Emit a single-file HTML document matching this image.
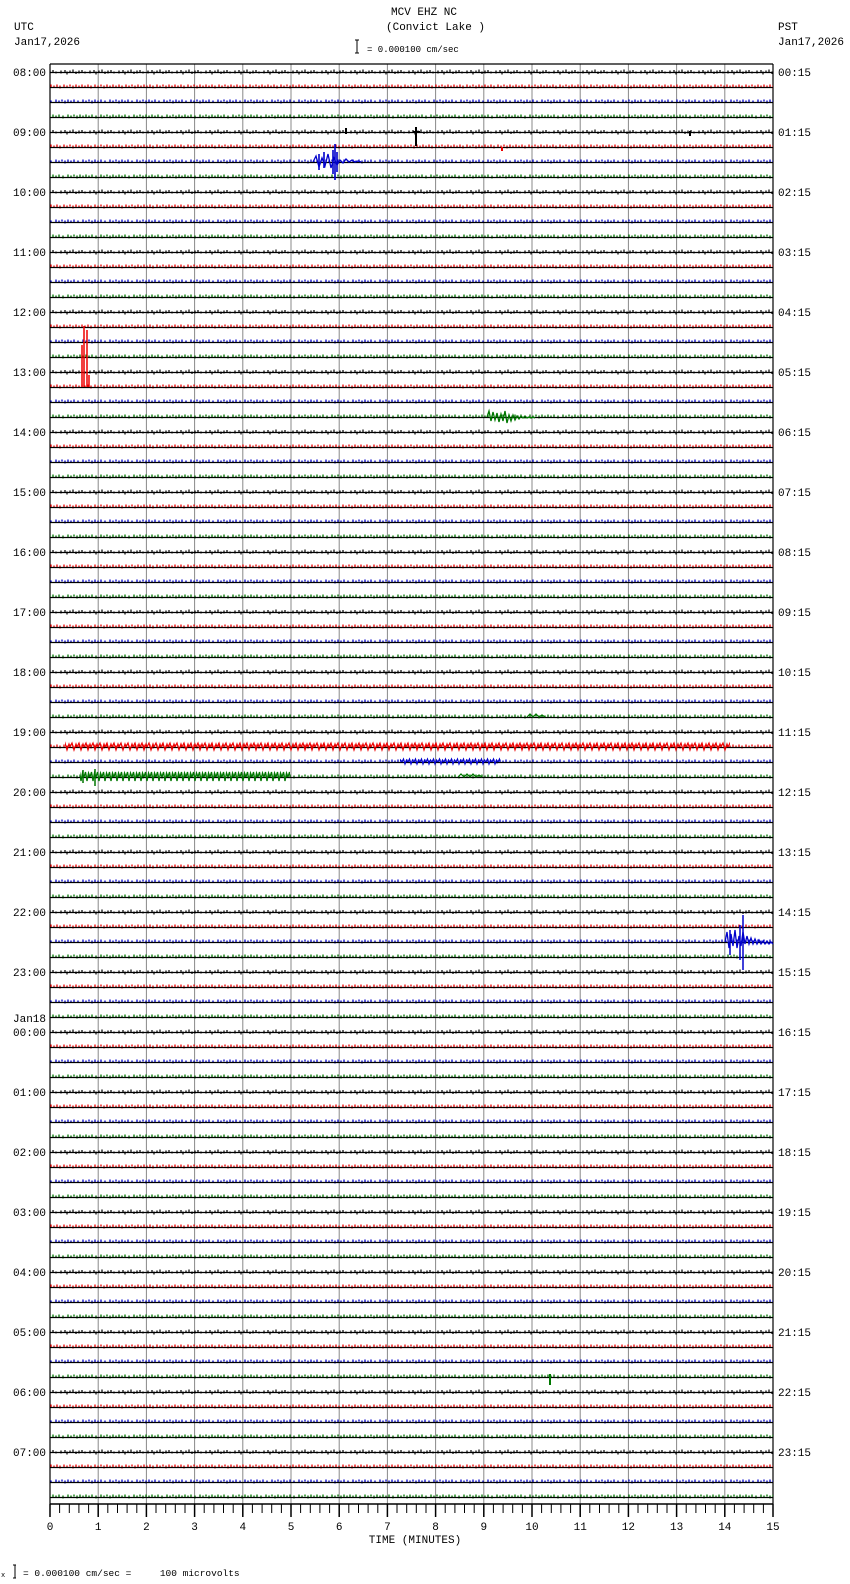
<!DOCTYPE html>
<html><head><meta charset="utf-8"><style>
html,body{margin:0;padding:0;background:#fff;width:850px;height:1584px;overflow:hidden}
svg{display:block}
text{font-family:"Liberation Mono","DejaVu Sans Mono",monospace;font-size:11px;fill:#000}
</style></head><body>
<svg width="850" height="1584" viewBox="0 0 850 1584" xmlns="http://www.w3.org/2000/svg">
<defs>
<pattern id="pk" width="29" height="15" patternUnits="userSpaceOnUse" y="-7.5"><path d="M3 6v3M7 5.5v2M9 7v3M12 6v2M15 5v3M18 7v2.5M21 6v3M24 5.5v2M27 7v2" stroke="#000" stroke-width="1.2" fill="none"/></pattern>
<pattern id="pr" width="31" height="15" patternUnits="userSpaceOnUse" y="-7.5"><path d="M2 5v3M5 6v2.5M8 5v2M11 6v3M14 5v2.5M17 6v2M20 5v3M23 6v2M26 5v2.5M29 6v3" stroke="#e00" stroke-width="1.3" fill="none"/></pattern>
<pattern id="pb" width="27" height="15" patternUnits="userSpaceOnUse" y="-7.5"><path d="M2 5v3M5 6v2.5M8 5v2M11 6v3M14 5v2.5M17 6v2M20 5v3M24 6v2.5" stroke="#00c" stroke-width="1.3" fill="none"/></pattern>
<pattern id="pg" width="33" height="15" patternUnits="userSpaceOnUse" y="-7.5"><path d="M2 5v3M5 6v2.5M8 5v2M11 6v3M14 5v2.5M17 6v2M20 5v3M23 6v2M26 5v2.5M30 6v3" stroke="#070" stroke-width="1.3" fill="none"/></pattern>
<pattern id="br" width="7" height="20" patternUnits="userSpaceOnUse" y="737"><path d="M0 10L2 6L4 13L6 7L7 10" stroke="#e00" stroke-width="1.2" fill="none"/></pattern>
<pattern id="bg" width="6" height="20" patternUnits="userSpaceOnUse" y="767"><path d="M0 10L1.5 5L3 14L4.5 6L6 10" stroke="#070" stroke-width="1.3" fill="none"/></pattern>
<pattern id="bb" width="6" height="20" patternUnits="userSpaceOnUse" y="752"><path d="M0 10L1.5 7L3 12L4.5 8L6 10" stroke="#00c" stroke-width="1.2" fill="none"/></pattern>
<g id="tr">
<rect x="50" y="-6" width="723" height="12" fill="url(#pk)"/>
<rect x="50" y="9" width="723" height="12" fill="url(#pr)"/>
<rect x="50" y="24" width="723" height="12" fill="url(#pb)"/>
<rect x="50" y="39" width="723" height="12" fill="url(#pg)"/>
<path d="M50 0.5H773M50 15.5H773M50 30.5H773M50 45.5H773" stroke="#000" stroke-width="1.3"/>
</g>
</defs>
<!-- header -->
<text x="391" y="15">MCV EHZ NC</text>
<text x="386" y="30">(Convict Lake )</text>
<text x="14" y="30">UTC</text>
<text x="14" y="45">Jan17,2026</text>
<text x="778" y="30">PST</text>
<text x="778" y="45">Jan17,2026</text>
<path d="M357 40V53M355 40h4M355 53h4" stroke="#000" stroke-width="1"/>
<text x="367" y="52" style="font-size:9px">= 0.000100 cm/sec</text>
<!-- grid -->
<g stroke="#888" stroke-width="1">
<path d="M98.2 64V1504M146.4 64V1504M194.6 64V1504M242.8 64V1504M291 64V1504M339.2 64V1504M387.4 64V1504M435.6 64V1504M483.8 64V1504M532 64V1504M580.2 64V1504M628.4 64V1504M676.6 64V1504M724.8 64V1504"/>
</g>
<path d="M50 64H773M50 64V1504M773 64V1504" stroke="#000" stroke-width="1.2" fill="none"/>
<!-- traces -->
<g transform="translate(0,72)"><use href="#tr"/></g>
<g transform="translate(0,132)"><use href="#tr"/></g>
<g transform="translate(0,192)"><use href="#tr"/></g>
<g transform="translate(0,252)"><use href="#tr"/></g>
<g transform="translate(0,312)"><use href="#tr"/></g>
<g transform="translate(0,372)"><use href="#tr"/></g>
<g transform="translate(0,432)"><use href="#tr"/></g>
<g transform="translate(0,492)"><use href="#tr"/></g>
<g transform="translate(0,552)"><use href="#tr"/></g>
<g transform="translate(0,612)"><use href="#tr"/></g>
<g transform="translate(0,672)"><use href="#tr"/></g>
<g transform="translate(0,732)"><use href="#tr"/></g>
<g transform="translate(0,792)"><use href="#tr"/></g>
<g transform="translate(0,852)"><use href="#tr"/></g>
<g transform="translate(0,912)"><use href="#tr"/></g>
<g transform="translate(0,972)"><use href="#tr"/></g>
<g transform="translate(0,1032)"><use href="#tr"/></g>
<g transform="translate(0,1092)"><use href="#tr"/></g>
<g transform="translate(0,1152)"><use href="#tr"/></g>
<g transform="translate(0,1212)"><use href="#tr"/></g>
<g transform="translate(0,1272)"><use href="#tr"/></g>
<g transform="translate(0,1332)"><use href="#tr"/></g>
<g transform="translate(0,1392)"><use href="#tr"/></g>
<g transform="translate(0,1452)"><use href="#tr"/></g>
<!-- events -->
<path d="M416 127V146M413 132h7M346 128v6M690 131v5" stroke="#000" stroke-width="2"/>
<path d="M313 162l3-6 3 11 3-9 3 8 3-12 3 14 3-10 3 7 3-5 3 3 3-4 3 3 3-2 3 2 3-1 3 1" stroke="#00c" stroke-width="1.3" fill="none"/>
<path d="M335 144V180M333 150V174M337 152V172M319 154V170M324 152V168" stroke="#00c" stroke-width="1.6"/>
<path d="M502 147v4" stroke="#e00" stroke-width="2"/>
<path d="M84 387V326M87 387V330M82 387V345M89 387V375" stroke="#e00" stroke-width="1.5"/>
<path d="M487 417l2-6 2 10 2-9 2 8 2-7 2 9 2-8 2 7 2-10 2 12 2-8 2 6 2-6 2 5 2-4 2 3 2-3 2 2 2-2 2 2 2-1 2 1 2-1 2 1" stroke="#070" stroke-width="1.3" fill="none"/>
<rect x="65" y="737" width="665" height="20" fill="url(#br)"/>
<rect x="400" y="752" width="100" height="20" fill="url(#bb)"/>
<rect x="80" y="767" width="210" height="20" fill="url(#bg)"/>
<path d="M95 769V786M83 770V783" stroke="#070" stroke-width="1.5"/>
<path d="M458 777l3-3 3 3 3-3 3 3 3-3 3 3 3-2 3 2" stroke="#070" stroke-width="1.2" fill="none"/>
<path d="M725 942l2-10 2 16 2-14 2 12 2-16 2 18 2-12 2 10 2-14 2 12 2-8 2 8 2-6 2 6 2-5 2 5 2-4 2 4 2-3 2 3 2-3 2 3 2-2 2 2" stroke="#00c" stroke-width="1.3" fill="none"/>
<path d="M743 915V970M740 925V960M730 930V955" stroke="#00c" stroke-width="1.5"/>
<path d="M527 717l3-3 3 3 3-3 3 3 3-2 3 2" stroke="#070" stroke-width="1.2" fill="none"/>
<path d="M550 1374v11" stroke="#070" stroke-width="2"/>
<!-- left labels -->
<g>
<text x="13" y="76">08:00</text><text x="13" y="136">09:00</text><text x="13" y="196">10:00</text><text x="13" y="256">11:00</text>
<text x="13" y="316">12:00</text><text x="13" y="376">13:00</text><text x="13" y="436">14:00</text><text x="13" y="496">15:00</text>
<text x="13" y="556">16:00</text><text x="13" y="616">17:00</text><text x="13" y="676">18:00</text><text x="13" y="736">19:00</text>
<text x="13" y="796">20:00</text><text x="13" y="856">21:00</text><text x="13" y="916">22:00</text><text x="13" y="976">23:00</text>
<text x="13" y="1022">Jan18</text><text x="13" y="1036">00:00</text><text x="13" y="1096">01:00</text><text x="13" y="1156">02:00</text><text x="13" y="1216">03:00</text>
<text x="13" y="1276">04:00</text><text x="13" y="1336">05:00</text><text x="13" y="1396">06:00</text><text x="13" y="1456">07:00</text>
</g>
<g>
<text x="778" y="76">00:15</text><text x="778" y="136">01:15</text><text x="778" y="196">02:15</text><text x="778" y="256">03:15</text>
<text x="778" y="316">04:15</text><text x="778" y="376">05:15</text><text x="778" y="436">06:15</text><text x="778" y="496">07:15</text>
<text x="778" y="556">08:15</text><text x="778" y="616">09:15</text><text x="778" y="676">10:15</text><text x="778" y="736">11:15</text>
<text x="778" y="796">12:15</text><text x="778" y="856">13:15</text><text x="778" y="916">14:15</text><text x="778" y="976">15:15</text>
<text x="778" y="1036">16:15</text><text x="778" y="1096">17:15</text><text x="778" y="1156">18:15</text><text x="778" y="1216">19:15</text>
<text x="778" y="1276">20:15</text><text x="778" y="1336">21:15</text><text x="778" y="1396">22:15</text><text x="778" y="1456">23:15</text>
</g>
<!-- axis -->
<path d="M50 1504H773" stroke="#000" stroke-width="1.5"/>
<g stroke="#000" stroke-width="1">
<path d="M59.6 1504v9M69.3 1504v9M78.9 1504v9M88.6 1504v9M107.8 1504v9M117.5 1504v9M127.1 1504v9M136.8 1504v9M156 1504v9M165.7 1504v9M175.3 1504v9M185 1504v9M204.2 1504v9M213.9 1504v9M223.5 1504v9M233.2 1504v9M252.4 1504v9M262.1 1504v9M271.7 1504v9M281.4 1504v9M300.6 1504v9M310.3 1504v9M319.9 1504v9M329.6 1504v9M348.8 1504v9M358.5 1504v9M368.1 1504v9M377.8 1504v9M397 1504v9M406.7 1504v9M416.3 1504v9M426 1504v9M445.2 1504v9M454.9 1504v9M464.5 1504v9M474.2 1504v9M493.4 1504v9M503.1 1504v9M512.7 1504v9M522.4 1504v9M541.6 1504v9M551.3 1504v9M560.9 1504v9M570.6 1504v9M589.8 1504v9M599.5 1504v9M609.1 1504v9M618.8 1504v9M638 1504v9M647.7 1504v9M657.3 1504v9M667 1504v9M686.2 1504v9M695.9 1504v9M705.5 1504v9M715.2 1504v9M734.4 1504v9M744.1 1504v9M753.7 1504v9M763.4 1504v9"/>
<path d="M50 1504v13M98.2 1504v13M146.4 1504v13M194.6 1504v13M242.8 1504v13M291 1504v13M339.2 1504v13M387.4 1504v13M435.6 1504v13M483.8 1504v13M532 1504v13M580.2 1504v13M628.4 1504v13M676.6 1504v13M724.8 1504v13M773 1504v13" stroke-width="1.5"/>
</g>
<g style="font-size:12px" text-anchor="middle">
<text x="50" y="1530">0</text><text x="98.2" y="1530">1</text><text x="146.4" y="1530">2</text><text x="194.6" y="1530">3</text>
<text x="242.8" y="1530">4</text><text x="291" y="1530">5</text><text x="339.2" y="1530">6</text><text x="387.4" y="1530">7</text>
<text x="435.6" y="1530">8</text><text x="483.8" y="1530">9</text><text x="532" y="1530">10</text><text x="580.2" y="1530">11</text>
<text x="628.4" y="1530">12</text><text x="676.6" y="1530">13</text><text x="724.8" y="1530">14</text><text x="773" y="1530">15</text>
<text x="415" y="1543">TIME (MINUTES)</text>
</g>
<text x="1" y="1577" style="font-size:7px">x</text>
<path d="M15 1565V1578M13 1565h3M13 1578h3" stroke="#000"/>
<text x="23" y="1576" style="font-size:9.5px" xml:space="preserve">= 0.000100 cm/sec =     100 microvolts</text>
</svg>
</body></html>
